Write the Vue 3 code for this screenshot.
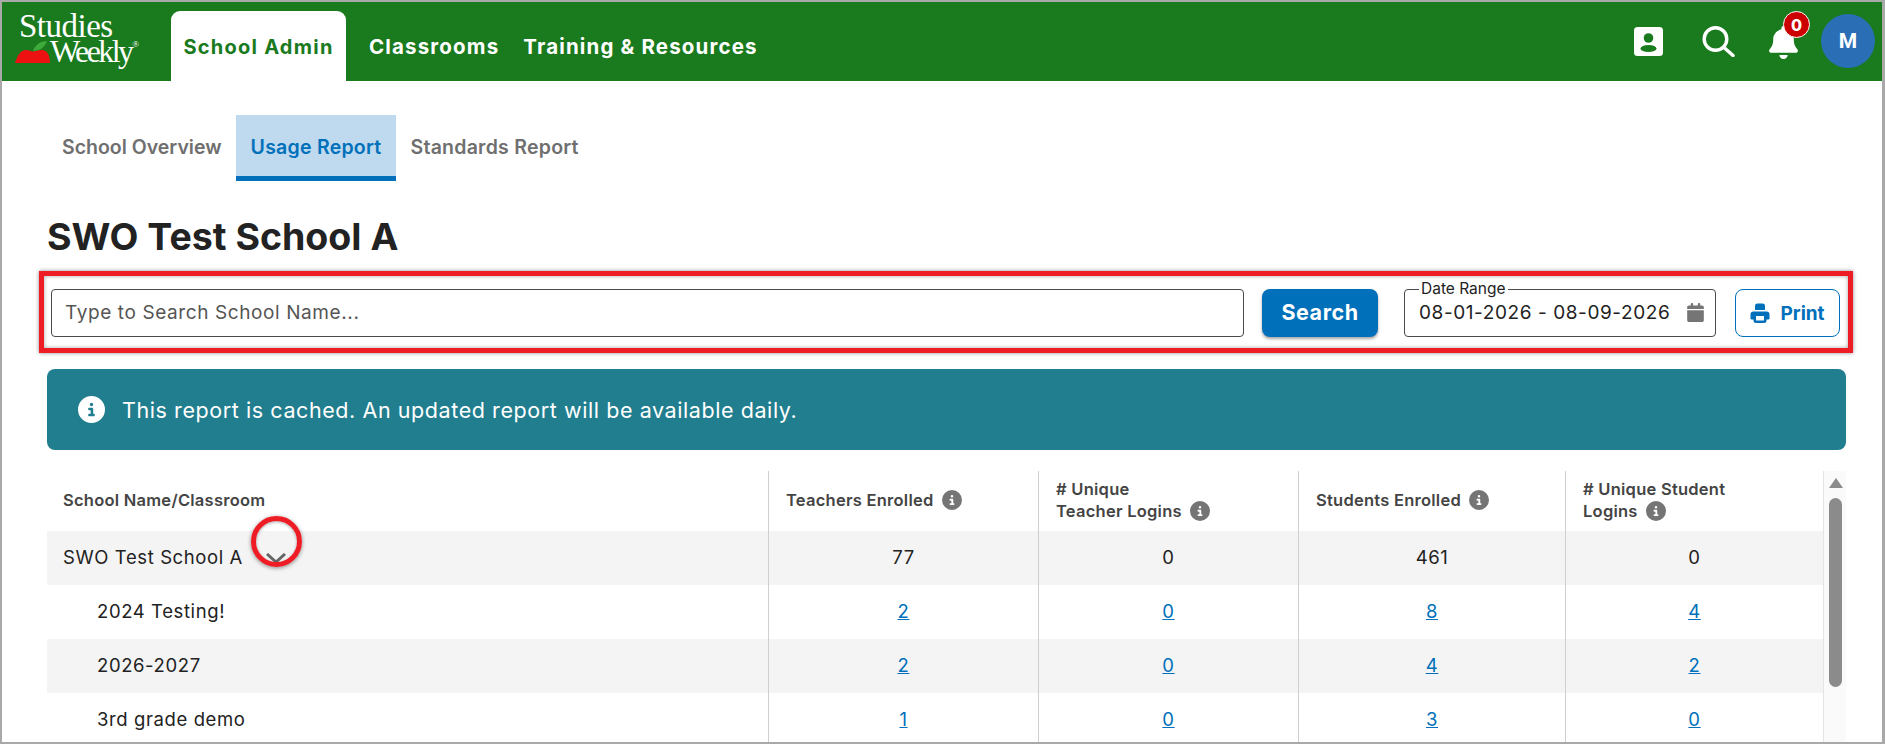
<script setup>
import { ref } from 'vue'

const search = ref('')

const navLinks = ['Classrooms', 'Training & Resources']
const subTabs = [
  { label: 'School Overview', active: false },
  { label: 'Usage Report', active: true },
  { label: 'Standards Report', active: false }
]

const columns = [
  { lines: ['Teachers Enrolled'] },
  { lines: ['# Unique', 'Teacher Logins'] },
  { lines: ['Students Enrolled'] },
  { lines: ['# Unique Student', 'Logins'] }
]

const rows = [
  { name: 'SWO Test School A', values: [77, 0, 461, 0], school: true },
  { name: '2024 Testing!', values: [2, 0, 8, 4] },
  { name: '2026-2027', values: [2, 0, 4, 2] },
  { name: '3rd grade demo', values: [1, 0, 3, 0] }
]

const infoPath = 'M256 512A256 256 0 1 0 256 0a256 256 0 1 0 0 512zM216 336h24V272H216c-13.3 0-24-10.7-24-24s10.7-24 24-24h48c13.3 0 24 10.7 24 24v88h8c13.3 0 24 10.7 24 24s-10.7 24-24 24H216c-13.3 0-24-10.7-24-24s10.7-24 24-24zm40-208a32 32 0 1 1 0 64 32 32 0 1 1 0-64z'
</script>

<template>
  <div class="frame">
    <header class="topbar">
      <div class="logo">
        <div class="logo-top">Studies</div>
        <div class="logo-bottom">
          <svg class="apple" viewBox="0 0 35 22">
            <path d="M18 10C20 4 25 0 32 0C30 6 25 10 18 10Z" fill="#3cab3a" />
            <path d="M0 22C2 16 5 9 11 9C14 9 16 10.500 18 10.500C21 10.500 23 9 27 9C32 9 35 14 35 22Z" fill="#ee1111" />
          </svg>
          <span class="logo-word">Weekly</span>
          <span class="logo-reg">®</span>
        </div>
      </div>
      <a class="nav-tab">School Admin</a>
      <a v-for="link in navLinks" :key="link" class="nav-link">{{ link }}</a>

      <div class="top-icons">
        <svg class="contact" viewBox="0 0 29 29">
          <rect width="29" height="29" rx="3.500" fill="#fff" />
          <circle cx="14.500" cy="11" r="4.800" fill="#1a7a1e" />
          <ellipse cx="14.500" cy="21.500" rx="8" ry="3.600" fill="#1a7a1e" />
        </svg>
        <svg class="magnifier" viewBox="0 0 33 31" fill="none" stroke="#fff" stroke-width="3.400" stroke-linecap="round">
          <circle cx="13.500" cy="13" r="11.300" />
          <path d="M22 21.500L31 29.500" />
        </svg>
        <div class="bell-wrap">
          <svg class="bell" viewBox="0 0 448 512" fill="#fff">
            <path d="M224 0c-17.700 0-32 14.300-32 32V51.200C119 66 64 130.600 64 208v18.800c0 47-17.300 92.400-48.500 127.600l-7.400 8.300c-8.400 9.400-10.400 22.900-5.300 34.400S19.400 416 32 416H416c12.600 0 24-7.400 29.200-18.900s3.100-25-5.300-34.400l-7.400-8.300C401.300 319.200 384 273.900 384 226.800V208c0-77.400-55-142-128-156.800V32c0-17.700-14.300-32-32-32zm45.300 493.300c12-12 18.700-28.300 18.700-45.300H224 160c0 17 6.700 33.300 18.700 45.300s28.300 18.700 45.300 18.700s33.300-6.700 45.300-18.700z" />
          </svg>
          <span class="badge">0</span>
        </div>
        <div class="avatar">M</div>
      </div>
    </header>

    <main class="content">
      <nav class="subnav">
        <a v-for="tab in subTabs" :key="tab.label" class="subtab" :class="{ active: tab.active }">{{ tab.label }}</a>
      </nav>

      <h1 class="title">SWO Test School A</h1>

      <section class="filters">
        <input v-model="search" class="search-input" type="text" placeholder="Type to Search School Name..." />
        <button class="search-btn" type="button">Search</button>
        <div class="date-field">
          <span class="date-label">Date Range</span>
          <span class="date-value">08-01-2026 - 08-09-2026</span>
          <svg class="calendar" viewBox="0 0 448 512" fill="#757575">
            <path d="M96 32V64H48C21.500 64 0 85.500 0 112v48H448V112c0-26.500-21.500-48-48-48H352V32c0-17.700-14.300-32-32-32s-32 14.300-32 32V64H160V32c0-17.700-14.300-32-32-32S96 14.300 96 32zM448 192H0V464c0 26.500 21.500 48 48 48H400c26.500 0 48-21.500 48-48V192z" />
          </svg>
        </div>
        <button class="print-btn" type="button">
          <svg class="printer" viewBox="0 0 20 20">
            <path d="M5 7V3a2.500 2.500 0 0 1 2.500-2.500h5A2.500 2.500 0 0 1 15 3v4z" fill="#0070ba" />
            <path d="M0.500 11.500a3 3 0 0 1 3-3h13a3 3 0 0 1 3 3v4a1 1 0 0 1-1 1H16.500v1a2.500 2.500 0 0 1-2.500 2.500H6a2.500 2.500 0 0 1-2.500-2.500v-1H1.500a1 1 0 0 1-1-1z" fill="#0070ba" />
            <rect x="6" y="13" width="8" height="4.500" fill="#fff" />
          </svg>
          Print
        </button>
      </section>

      <div class="alert">
        <svg class="alert-icon" viewBox="0 0 512 512" fill="#fff"><path :d="infoPath" /></svg>
        <span>This report is cached. An updated report will be available daily.</span>
      </div>

      <div class="table-wrap">
        <div class="report">
          <div class="cell head first">School Name/Classroom</div>
          <div v-for="col in columns" :key="col.lines[0]" class="cell head">
            <div>
              <div v-for="(line, i) in col.lines" :key="line" class="head-line">
                {{ line }}
                <svg v-if="i === col.lines.length - 1" class="info" viewBox="0 0 512 512" fill="#757575"><path :d="infoPath" /></svg>
              </div>
            </div>
          </div>

          <template v-for="(row, r) in rows" :key="row.name">
            <div class="cell first" :class="{ shaded: r % 2 === 0, child: !row.school }">
              {{ row.name }}
              <svg v-if="row.school" class="chevron" viewBox="0 0 20 10" fill="none" stroke="#666" stroke-width="3">
                <path d="M1 1L10 9L19 1" />
              </svg>
            </div>
            <div v-for="(val, c) in row.values" :key="c" class="cell num" :class="{ shaded: r % 2 === 0 }">
              <template v-if="row.school">{{ val }}</template>
              <a v-else class="count">{{ val }}</a>
            </div>
          </template>
        </div>

        <div class="scrollbar">
          <span class="scroll-up"></span>
          <span class="scroll-thumb"></span>
        </div>

        <!-- red annotation drawn over the screenshot -->
        <span class="ring"></span>
      </div>
    </main>
  </div>
</template>

<style scoped>
.frame {
  width: 1885px;
  height: 744px;
  box-sizing: border-box;
  border: 2px solid #a9a9a9;
  border-right-width: 3px;
  overflow: hidden;
  background: #fff;
  font-family: Inter, "Open Sans", sans-serif;
  color: #222;
}

.topbar {
  height: 79px;
  background: #1a7a1e;
  display: flex;
  align-items: flex-end;
  padding-left: 12px;
}

.logo {
  width: 157px;
  align-self: flex-start;
  padding-top: 11px;
  font-family: "Liberation Serif", serif;
  color: #fff;
}

.logo-top {
  font-size: 33px;
  line-height: 26px;
  letter-spacing: -0.500px;
  margin-left: 5px;
}

.logo-bottom {
  display: flex;
  align-items: flex-end;
  height: 26px;
}

.apple {
  width: 35px;
  height: 22px;
  flex: none;
  margin-bottom: 2px;
  margin-left: 1px;
}

.logo-word {
  font-size: 32px;
  line-height: 27px;
  letter-spacing: -2.600px;
}

.logo-reg {
  font-size: 9px;
  align-self: flex-start;
  margin-left: 1px;
}

.nav-tab {
  width: 175px;
  height: 70px;
  box-sizing: border-box;
  background: #fff;
  color: #1a7a1e;
  border-radius: 9px 9px 0 0;
  display: flex;
  align-items: center;
  justify-content: center;
  padding-top: 1px;
  font-weight: 700;
  font-size: 20px;
  letter-spacing: 1.250px;
  margin-right: 11px;
}

.nav-link {
  height: 70px;
  display: flex;
  align-items: center;
  padding: 1px 12px 0;
  box-sizing: border-box;
  color: #fff;
  font-weight: 700;
  font-size: 20.500px;
  letter-spacing: 1.150px;
}

.top-icons {
  margin-left: auto;
  align-self: stretch;
  display: flex;
  align-items: flex-start;
  position: relative;
  padding-right: 7px;
}

.contact {
  width: 29px;
  height: 29px;
  margin-top: 25px;
  margin-right: 39px;
}

.magnifier {
  width: 33px;
  height: 31px;
  margin-top: 24px;
  margin-right: 34px;
}

.bell-wrap {
  position: relative;
  width: 29px;
  margin-top: 24px;
  margin-right: 23px;
}

.bell {
  width: 29px;
  height: 33px;
  display: block;
}

.badge {
  position: absolute;
  top: -15px;
  left: 14px;
  width: 27px;
  height: 27px;
  box-sizing: border-box;
  border-radius: 50%;
  background: #cc0000;
  border: 1px solid #fff;
  color: #fff;
  font-size: 16px;
  font-weight: 800;
  display: flex;
  align-items: center;
  justify-content: center;
}

.avatar {
  width: 54px;
  height: 54px;
  margin-top: 12px;
  border-radius: 50%;
  background: #2a6fb5;
  color: #fff;
  font-family: Roboto, sans-serif;
  font-weight: 700;
  font-size: 21px;
  display: flex;
  align-items: center;
  justify-content: center;
}

.content {
  padding: 34px 36px 0 45px;
}

.subnav {
  display: flex;
  height: 66px;
  padding-left: 1px;
}

.subtab {
  height: 66px;
  box-sizing: border-box;
  padding: 0 14px 3px;
  display: flex;
  align-items: center;
  font-weight: 600;
  font-size: 19.500px;
  letter-spacing: 0.250px;
  color: #6f6f6f;
}

.subtab:first-child {
  letter-spacing: 0;
}

.subtab.active {
  padding: 2px 15px 0;
  background: #bfd9ee;
  color: #0070ba;
  border-bottom: 5px solid #0070ba;
}

.title {
  margin: 34px 0 11px;
  height: 45px;
  font-size: 37.500px;
  line-height: 44px;
  font-weight: 700;
  color: #222;
}

.filters {
  margin: 0 -7px 16px -8px;
  height: 82px;
  box-sizing: border-box;
  border: 5px solid #ee1c25;
  box-shadow: 0 0 4px rgba(0, 0, 0, 0.45), inset 0 0 4px rgba(0, 0, 0, 0.35);
  padding: 13px 8px 11px 7px;
  display: flex;
  align-items: stretch;
}

.search-input {
  flex: 1;
  min-width: 0;
  box-sizing: border-box;
  border: 1px solid #4a4a4a;
  border-radius: 4px;
  padding: 0 13px 2px;
  font: 400 19px Inter, sans-serif;
  letter-spacing: 0.600px;
  color: #222;
  outline: none;
  margin-right: 18px;
}

.search-input::placeholder {
  color: #555;
  opacity: 1;
}

.search-btn {
  width: 116px;
  border: none;
  border-radius: 8px;
  background: #0070ba;
  color: #fff;
  font: 700 21.500px Inter, sans-serif;
  letter-spacing: 0.550px;
  box-shadow: 0 2px 3px rgba(0, 0, 0, 0.35);
  margin-right: 26px;
  padding: 0 0 2px;
}

.date-field {
  position: relative;
  width: 312px;
  box-sizing: border-box;
  border: 1px solid #4a4a4a;
  border-radius: 4px;
  padding: 0 11px 2px 14px;
  display: flex;
  align-items: center;
  justify-content: space-between;
  margin-right: 19px;
}

.date-label {
  position: absolute;
  top: -9px;
  left: 14px;
  padding: 0 2px;
  background: #fff;
  font-size: 15.500px;
  line-height: 16px;
  color: #222;
}

.date-value {
  font-size: 19px;
  letter-spacing: 0.580px;
  color: #222;
  white-space: nowrap;
}

.calendar {
  width: 17px;
  height: 19px;
  flex: none;
}

.print-btn {
  width: 105px;
  box-sizing: border-box;
  border: 1px solid #0070ba;
  border-radius: 8px;
  background: #fff;
  color: #0070ba;
  font: 700 19px Inter, sans-serif;
  display: flex;
  align-items: center;
  justify-content: center;
  gap: 10px;
  padding: 0;
}

.printer {
  width: 20px;
  height: 20px;
}

.alert {
  height: 81px;
  border-radius: 8px;
  background: #217e8e;
  color: #fff;
  display: flex;
  align-items: center;
  padding-left: 31px;
  gap: 17px;
  font-size: 21.500px;
  letter-spacing: 0.580px;
}

.alert-icon {
  width: 27px;
  height: 27px;
  flex: none;
}

.table-wrap {
  position: relative;
  margin-top: 21px;
  display: flex;
}

.report {
  width: 1776px;
  flex: none;
  display: grid;
  grid-template-columns: 721px 270px 260px 267px 258px;
  grid-auto-rows: 54px;
  grid-template-rows: 60px;
}

.cell {
  border-left: 1px solid #cfcfcf;
  display: flex;
  align-items: center;
  padding-bottom: 2px;
  box-sizing: border-box;
  font-size: 18.500px;
  letter-spacing: 0.600px;
  color: #222;
}

.cell.first {
  border-left: none;
  padding-left: 16px;
}

.cell.child {
  padding-left: 50px;
}

.shaded {
  background: #f4f4f4;
}

.head {
  padding-left: 17px;
  padding-bottom: 2px;
  font-size: 16.500px;
  font-weight: 600;
  line-height: 22px;
  letter-spacing: 0.250px;
  color: #444;
}

.head-line {
  display: flex;
  align-items: center;
  gap: 8px;
}

.info {
  width: 20px;
  height: 20px;
  flex: none;
}

.num {
  justify-content: center;
}

.count {
  color: #0070ba;
  text-decoration: underline;
}

.chevron {
  width: 20px;
  height: 10px;
  margin-left: 23px;
  margin-top: 2px;
}

.scrollbar {
  width: 23px;
  height: 271px;
  flex: none;
  background: #fafafa;
  border-left: 1px solid #e4e4e4;
  box-sizing: border-box;
  position: relative;
}

.scroll-up {
  position: absolute;
  top: 7px;
  left: 5px;
  border-left: 7px solid transparent;
  border-right: 7px solid transparent;
  border-bottom: 10px solid #8b8b8b;
}

.scroll-thumb {
  position: absolute;
  top: 27px;
  left: 5px;
  width: 13px;
  height: 189px;
  border-radius: 7px;
  background: #8b8b8b;
}

.ring {
  position: absolute;
  left: 204px;
  top: 45px;
  width: 51px;
  height: 51px;
  box-sizing: border-box;
  border: 5px solid #ee1c25;
  border-radius: 50%;
  box-shadow: 0 1px 4px rgba(0, 0, 0, 0.45), inset 0 1px 3px rgba(0, 0, 0, 0.35);
}
</style>
